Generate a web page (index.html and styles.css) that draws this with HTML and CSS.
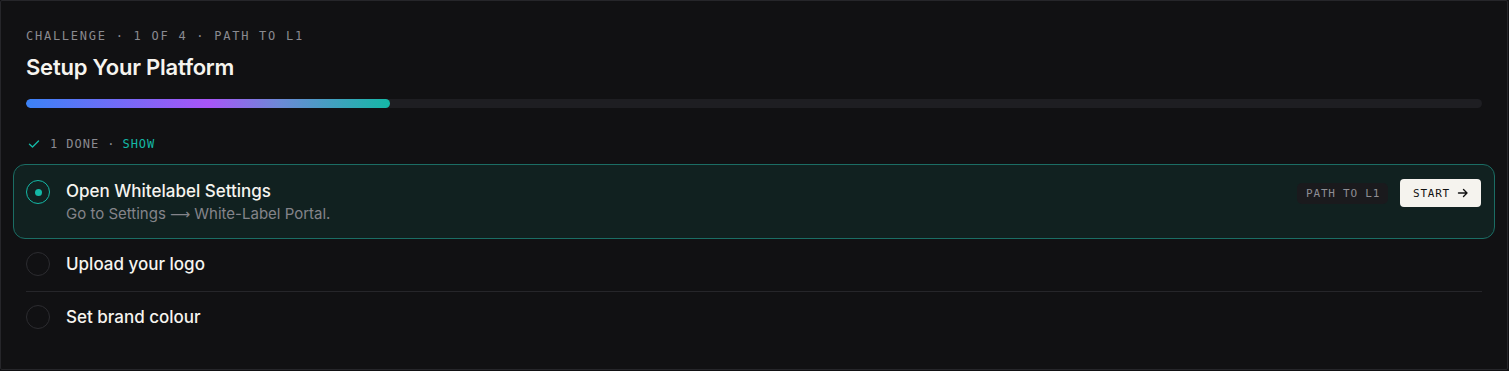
FILE: index.html
```html
<!DOCTYPE html>
<html lang="en">
<head>
<meta charset="utf-8">
<title>Setup Your Platform</title>
<link rel="stylesheet" href="styles.css">
</head>
<body>
<main class="panel">
  <div class="eyebrow">CHALLENGE · 1 OF 4 · PATH TO L1</div>
  <h1 class="title">Setup Your Platform</h1>
  <div class="track"><div class="fill" style="width:25%"></div></div>
  <div class="done">
    <svg class="check" width="12" height="12" viewBox="0 0 12 12"><path d="M1.5 6.3 L4.5 9 L10.5 3" fill="none" stroke="#14b8a6" stroke-width="1.4" stroke-linecap="round" stroke-linejoin="round"/></svg>
    <span>1 DONE ·</span>
    <span class="show">SHOW</span>
  </div>
  <ul class="steps">
    <li class="step active">
      <span class="radio on"><span class="dot"></span></span>
      <div class="step-body">
        <div class="step-title">Open Whitelabel Settings</div>
        <div class="step-desc">Go to Settings <span class="arrow">⟶</span> White-Label Portal.</div>
      </div>
      <div class="step-actions">
        <span class="badge">PATH TO L1</span>
        <button class="start">START
          <svg width="12" height="12" viewBox="0 0 12 12"><path d="M1.5 6 H10 M6.5 2.5 L10 6 L6.5 9.5" fill="none" stroke="#111" stroke-width="1.4" stroke-linecap="round" stroke-linejoin="round"/></svg>
        </button>
      </div>
    </li>
    <li class="step divided">
      <span class="radio"></span>
      <div class="step-body"><div class="step-title">Upload your logo</div></div>
    </li>
    <li class="step">
      <span class="radio"></span>
      <div class="step-body"><div class="step-title">Set brand colour</div></div>
    </li>
  </ul>
</main>
</body>
</html>
```

FILE: styles.css
```css
* { box-sizing: border-box; }
html, body { margin: 0; padding: 0; background: #111113; }
body { width: 1509px; height: 371px; overflow: hidden; }
.panel {
  width: 1508px;
  height: 370px;
  border: 1px solid #26262a;
  border-radius: 2px;
  background: #111113;
  padding: 25px 25px 0 25px;
  font-family: Inter, "Noto Sans", sans-serif;
  color: #f4f2ec;
}
.eyebrow {
  font-family: "DejaVu Sans Mono", monospace;
  font-size: 12px;
  letter-spacing: 0.145em;
  color: #8a8a90;
  line-height: 20px;
}
.title {
  margin: 6px 0 0;
  font-size: 22px;
  font-weight: 600;
  letter-spacing: -0.01em;
  line-height: 30px;
  color: #f6f4ef;
}
.track {
  margin-top: 17px;
  height: 9px;
  border-radius: 5px;
  background: #1e1e22;
  overflow: hidden;
}
.fill {
  height: 100%;
  border-radius: 5px;
  background: linear-gradient(90deg, #3b82f6 0%, #a855f7 50%, #6b8ad6 70%, #14b8a6 100%);
}
.done {
  margin-top: 26px;
  display: flex;
  align-items: center;
  gap: 7px;
  font-family: "DejaVu Sans Mono", monospace;
  font-size: 12px;
  letter-spacing: 0.08em;
  color: #8a8a90;
  line-height: 20px;
}
.done .check { margin: 0 3px 0 2px; }
.done .show { color: #14b8a6; }
.steps { list-style: none; margin: 10px 0 0; padding: 0; }
.step {
  display: flex;
  align-items: flex-start;
  gap: 16px;
  padding: 12px 0 14px;
}
.step.divided { border-bottom: 1px solid #26262a; }
.step.active {
  margin: 0 -13px;
  padding: 14px 13px 13px 12px;
  border: 1px solid #1b6d64;
  border-radius: 12px;
  background: #112120;
}
.radio {
  flex: none;
  width: 24px;
  height: 24px;
  margin-top: 1px;
  border-radius: 50%;
  border: 1.5px solid #2c2c30;
  display: flex;
  align-items: center;
  justify-content: center;
}
.radio.on { border-color: #14b8a6; }
.radio .dot { width: 7px; height: 7px; border-radius: 50%; background: #14b8a6; }
.step-body { flex: 1; }
.step-title { font-size: 17px; font-weight: 500; line-height: 26px; color: #f6f4ef; }
.step.active .step-title { line-height: 24px; }
.step-desc { font-size: 15px; line-height: 22px; color: #84848a; }
.step-desc .arrow { font-family: "DejaVu Sans", sans-serif; font-size: 14px; }
.step-actions { display: flex; align-items: center; gap: 12px; padding-top: 0; }
.badge {
  font-family: "DejaVu Sans Mono", monospace;
  font-size: 11px;
  letter-spacing: 0.07em;
  color: #8e8e94;
  background: #1a1a1d;
  padding: 4px 8px 4px 9px;
  border-radius: 5px;
  line-height: 13px;
}
.start {
  display: flex;
  align-items: center;
  gap: 7px;
  font-family: "DejaVu Sans Mono", monospace;
  font-size: 11px;
  letter-spacing: 0.07em;
  color: #111;
  background: #f5f3ee;
  border: none;
  border-radius: 4px;
  padding: 0 12px 0 13px;
  height: 28px;
}
```
